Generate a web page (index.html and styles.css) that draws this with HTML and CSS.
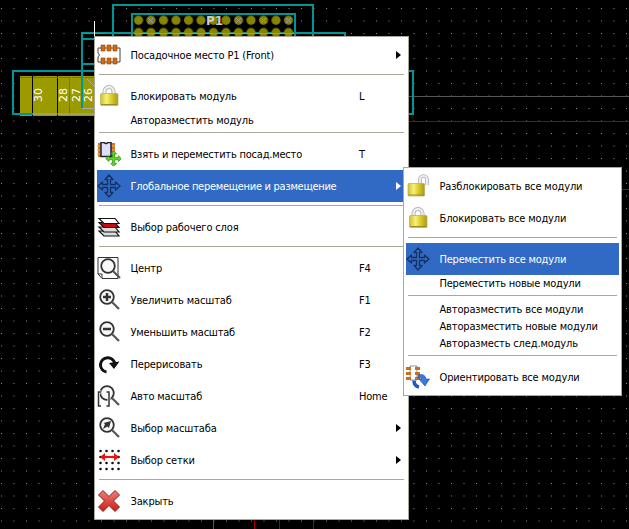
FILE: index.html
```
<!DOCTYPE html>
<html lang="ru">
<head>
<meta charset="utf-8">
<title>Pcbnew</title>
<link rel="stylesheet" href="styles.css">
</head>
<body>
<svg width="0" height="0" class="defs">
  <defs>
    <linearGradient id="gold" x1="0" x2="1"><stop offset="0" stop-color="#cfc030"/><stop offset=".35" stop-color="#f8f07a"/><stop offset=".6" stop-color="#ddd02c"/><stop offset="1" stop-color="#aa981c"/></linearGradient>
    <linearGradient id="redg" x1="0" y1="0" x2="0" y2="1"><stop offset="0" stop-color="#e88078"/><stop offset="1" stop-color="#d01c14"/></linearGradient>
    <symbol id="lock" viewBox="0 0 24 24"><path d="M7.500 12V7.500a4.500 4.500 0 0 1 9 0V12" fill="none" stroke="#aaa" stroke-width="4"/><path d="M7.500 12V7.500a4.500 4.500 0 0 1 9 0V12" fill="none" stroke="#eee" stroke-width="2.400"/><rect x="3.500" y="9.500" width="17.500" height="12" rx="1" fill="url(#gold)" stroke="#b8ac50" stroke-width=".7"/><path d="M4 20.500h16.500" stroke="#9a8c20"/></symbol>
    <symbol id="unlock" viewBox="0 0 24 24"><path d="M14 11V5.500a3.500 3.500 0 0 1 7 0V11" fill="none" stroke="#aaa" stroke-width="3.600"/><path d="M14 11V5.500a3.500 3.500 0 0 1 7 0V11" fill="none" stroke="#eee" stroke-width="2.200"/><rect x="2" y="9.500" width="16.500" height="12.500" rx="1" fill="url(#gold)" stroke="#b8ac50" stroke-width=".7"/><path d="M2.500 21h16" stroke="#9a8c20"/></symbol>
    <symbol id="arrows" viewBox="0 0 24 24"><path d="M12 1l4 4.500h-2.500v5h5V8L23 12l-4.500 4v-2.500h-5v5H16L12 23l-4-4.500h2.500v-5h-5V16L1 12l4.500-4v2.500h5v-5H8z" stroke-linejoin="round"/></symbol>
    <symbol id="lens" viewBox="0 0 24 24"><circle cx="10" cy="9" r="6.800" fill="#f8f8f8" stroke="#333" stroke-width="1.800"/><path d="M15 14l7 7" stroke="#555" stroke-width="2.200"/></symbol>
  </defs>
</svg>

<main class="screen">
  <svg class="board" width="629" height="529">
    <defs><pattern id="grid" x="1" y="8" width="12.500" height="12.500" patternUnits="userSpaceOnUse"><rect width="1" height="1" fill="#8c8c8c"/></pattern>
    <pattern id="pads" x="132" y="13.500" width="12.500" height="12.300" patternUnits="userSpaceOnUse"><circle cx="6.500" cy="6.700" r="4.600" fill="#858500"/></pattern></defs>
    <rect width="629" height="529" fill="#000"/>
    <rect width="629" height="529" fill="url(#grid)"/>
    <path d="M409 96.500H629M213.500 519V529" stroke="#555"/><path d="M409 121.500H629M621 189.500H629M254.500 519V529M279.500 519V529M313.500 519V529" stroke="#a00000"/>
    <g fill="#9b9b00"><path d="M20 76H32V116H20zM33 76H57V116H33zM58 76H94V116H58z"/></g>
    <path d="M20 77.500H94M69.500 77V115" stroke="#777700" stroke-dasharray="12 1"/>
    <g fill="none" stroke="#009696" stroke-width="2"><path d="M113 37V5H313V37M132 37V14H295V37M82 108V33H345V37M82 39H95M82 64H95M94 71H13V114H33M409 71H413V114H409"/></g>
    <path d="M33 114H94M82 108.500H94M87 79L94 86" stroke="#aaa" fill="none"/>
    <rect x="133" y="14" width="162" height="24" fill="url(#pads)"/>
    <path d="M134 33.500H294" stroke="#8b9b9b"/><path d="M148 18l5 5m0-5l-5 5M236 18l5 5m0-5l-5 5M261 18l5 5m0-5l-5 5M286 18l5 5m0-5l-5 5" stroke="#9898b0"/>
    <path d="M83 33.500H106" stroke="#c55"/><path d="M94.500 21V37" stroke="#fff"/>
    <g class="board-text"><text x="206" y="25" class="ref">P1</text>
    <text transform="translate(42 102) rotate(-90)">30</text><text transform="translate(67 102) rotate(-90)">28</text><text transform="translate(80 102) rotate(-90)">27</text><text transform="translate(92 102) rotate(-90)">26</text></g>
  </svg>

  <nav class="menu main-menu">
    <div class="item"><svg class="icon" viewBox="0 0 24 24"><path d="M3 5H1v5q3 2 0 4v5h22V5z" fill="#fff" stroke="#444"/><g fill="#d06a10" stroke="#8a4408" stroke-width=".6"><path d="M4 2h4v6H4zM10 2h4v6h-4zM16 2h4v6h-4zM4 15h4v6H4zM10 15h4v6h-4zM16 15h4v6h-4z"/></g></svg><span class="label">Посадочное место P1 (Front)</span><i class="arrow"></i></div>
    <hr>
    <div class="item"><svg class="icon"><use href="#lock"/></svg><span class="label">Блокировать модуль</span><kbd>L</kbd></div>
    <div class="item short"><span class="label">Авторазместить модуль</span></div>
    <hr>
    <div class="item"><svg class="icon" viewBox="0 0 24 24"><path d="M1 1h17v14H1z" fill="#d07820"/><path d="M0 4h18M0 8h18M0 12h18" stroke="#eeb070"/><path d="M4 .5h3q2 2 4 0h3v14H4z" fill="#dce0f8" stroke="#223" stroke-width="1.500"/><g transform="translate(8 8) scale(.72)" fill="#62d62c" stroke="#27930c" stroke-width="1"><use href="#arrows" width="24" height="24"/></g></svg><span class="label tight">Взять и переместить посад.место</span><kbd>T</kbd></div>
    <div class="item active"><svg class="icon move"><use href="#arrows"/></svg><span class="label tightest">Глобальное перемещение и размещение</span><i class="arrow"></i></div>
    <hr>
    <div class="item"><svg class="icon" viewBox="0 0 24 24" stroke="#111" stroke-width="1.200"><path d="M2 16h16l4 5H7z" fill="#ddd"/><path d="M2 12h16l4 5H7z" fill="#ddd"/><path d="M2 7.500h16l4 5H7z" fill="#c40c14"/><path d="M2 3.500h16l4 5H7z" fill="#fff"/></svg><span class="label">Выбор рабочего слоя</span></div>
    <hr>
    <div class="item"><svg class="icon" viewBox="0 0 24 24"><path d="M1 1.500h20v21H5L1 18z" fill="#fff" stroke="#333"/><path d="M1 18h4v4" fill="none" stroke="#333"/><use href="#lens" width="24" height="24" x="1" y="1"/></svg><span class="label">Центр</span><kbd>F4</kbd></div>
    <div class="item"><svg class="icon" viewBox="0 0 24 24"><use href="#lens" width="24" height="24"/><path d="M6 9h8M10 5v8" stroke="#333" stroke-width="2.500"/></svg><span class="label">Увеличить масштаб</span><kbd>F1</kbd></div>
    <div class="item"><svg class="icon" viewBox="0 0 24 24"><use href="#lens" width="24" height="24"/><path d="M6 9h8" stroke="#333" stroke-width="2.500"/></svg><span class="label tight">Уменьшить масштаб</span><kbd>F2</kbd></div>
    <div class="item"><svg class="icon" viewBox="0 0 24 24"><path d="M9.500 20A7.200 7.200 0 1 1 17.800 12" fill="none" stroke="#111" stroke-width="3"/><path d="M12 11l10.500-1.500L17 17z" fill="#111"/></svg><span class="label">Перерисовать</span><kbd>F3</kbd></div>
    <div class="item"><svg class="icon" viewBox="0 0 24 24"><use href="#lens" width="24" height="24"/><path d="M4 8H1.500v14H4M9.500 8H12v14H9.500" fill="none" stroke="#fff" stroke-width="3"/><path d="M4 8H1.500v14H4M9.500 8H12v14H9.500" fill="none" stroke="#333" stroke-width="1.500"/></svg><span class="label">Авто масштаб</span><kbd>Home</kbd></div>
    <div class="item"><svg class="icon" viewBox="0 0 24 24"><use href="#lens" width="24" height="24"/><path d="M6 13l2-5-1.500-1L14 5l-2 7-1.500-1.500z" fill="#333"/></svg><span class="label">Выбор масштаба</span><i class="arrow"></i></div>
    <div class="item"><svg class="icon" viewBox="0 0 24 24"><path d="M3.500 3h20M3.500 9h20M3.500 15h20M3.500 21h20" stroke="#111" stroke-width="2.600" stroke-linecap="round" stroke-dasharray=".01 6"/><path d="M5 9h14" stroke="#f01010" stroke-width="2"/><path d="M8 5v8L3 9zM17 5v8l5-4z" fill="#f01010"/></svg><span class="label">Выбор сетки</span><i class="arrow"></i></div>
    <hr>
    <div class="item"><svg class="icon" viewBox="0 0 24 24"><path d="M6 1.500l6 6 6-6L22.500 6l-6 6 6 6-4.500 4.500-6-6-6 6L1.500 18l6-6-6-6z" fill="url(#redg)" stroke="#8c2020" stroke-linejoin="round"/></svg><span class="label">Закрыть</span></div>
  </nav>

  <nav class="menu sub-menu">
    <div class="item"><svg class="icon"><use href="#unlock"/></svg><span class="label">Разблокировать все модули</span></div>
    <div class="item"><svg class="icon"><use href="#lock"/></svg><span class="label">Блокировать все модули</span></div>
    <hr>
    <div class="item active"><svg class="icon move"><use href="#arrows"/></svg><span class="label tight">Переместить все модули</span></div>
    <div class="item short"><span class="label tight">Переместить новые модули</span></div>
    <hr>
    <div class="item short"><span class="label">Авторазместить все модули</span></div>
    <div class="item short"><span class="label">Авторазместить новые модули</span></div>
    <div class="item short"><span class="label">Авторазместь след.модуль</span></div>
    <hr>
    <div class="item"><svg class="icon" viewBox="0 0 24 24"><path d="M4 1h7v14H4z" fill="#fff" stroke="#777" stroke-width=".8"/><path d="M0 2h5v3H0zM0 7h5v3H0zM0 12h5v3H0zM9 2h5v3H9zM9 7h5v3H9zM9 12h5v3H9z" fill="#c9701c"/><path d="M12 10q7-2 8 4h3.500L19 21l-6-7h3q-1-2-4-1z" fill="#3b78df" stroke="#194ba8" stroke-width=".6"/><path d="M8 15.500q0 5.500 5 6.500" fill="none" stroke="#1f57c8" stroke-width="3.500"/></svg><span class="label">Ориентировать все модули</span></div>
  </nav>
</main>
</body>
</html>
```
FILE: styles.css
```
body { margin: 0; background: #000; overflow: hidden; }
.defs { position: absolute; }
.screen { position: relative; width: 629px; height: 529px; overflow: hidden; }
.board { display: block; }
.board-text { font: 11px "DejaVu Sans", sans-serif; fill: #fff; }
.ref { font-size: 12px; fill: #ccc; font-weight: bold; }
.menu {
  position: absolute;
  box-sizing: border-box;
  padding: 2px;
  background: #fff;
  border: 1px solid #aca899;
  font: 11px/17px "DejaVu Sans Condensed", "DejaVu Sans", sans-serif;
  color: #000;
}
.main-menu { left: 94px; top: 36px; width: 315px; height: 484px; }
.sub-menu { left: 403px; top: 167px; width: 219px; height: 229px; }
.item { display: flex; align-items: center; height: 32px; padding-left: 33.500px; }
.item.short { height: 17px; }
.icon { width: 24px; height: 24px; margin-left: -33.500px; margin-right: 9.500px; flex: none; }
.label { flex: 1; white-space: nowrap; letter-spacing: -0.15px; }
.tight { letter-spacing: -0.21px; }
.tightest { letter-spacing: -0.28px; }
.item.active { background: #316ac5; color: #fff; }
.move { fill: #2c68c8; stroke: #18305c; stroke-width: 1.3; }
kbd { width: 47px; font: inherit; letter-spacing: -0.2px; }
.arrow { margin-right: 5px; border-left: 5px solid #000; border-top: 4px solid transparent; border-bottom: 4px solid transparent; }
.active .arrow { border-left-color: #fff; }
hr { height: 1px; margin: 3px 2px 5px; border: 0; background: #aca899; }
```
